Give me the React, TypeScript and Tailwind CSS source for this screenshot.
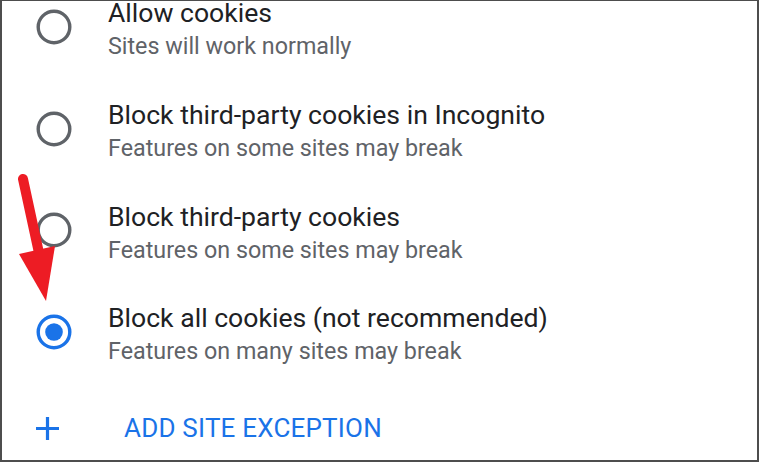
import { Fragment } from 'react';

type Option = {
  title: string;
  subtitle: string;
  checked?: boolean;
};

const options: Option[] = [
  { title: 'Allow cookies', subtitle: 'Sites will work normally' },
  {
    title: 'Block third-party cookies in Incognito',
    subtitle: 'Features on some sites may break',
  },
  { title: 'Block third-party cookies', subtitle: 'Features on some sites may break' },
  {
    title: 'Block all cookies (not recommended)',
    subtitle: 'Features on many sites may break',
    checked: true,
  },
];

const Radio = ({ checked }: { checked?: boolean }) => (
  <svg width="40" height="40" viewBox="0 0 40 40" className="shrink-0">
    <circle
      cx="20"
      cy="20"
      r="15.8"
      fill="none"
      stroke={checked ? '#1a73e8' : '#5f6368'}
      strokeWidth="3.4"
    />
    {checked ? <circle cx="20" cy="20" r="8.8" fill="#1a73e8" /> : null}
  </svg>
);

const App = () => {
  return (
    <div
      className="relative w-[759px] h-[462px] overflow-hidden bg-white border-t border-l-2 border-r-2 border-b-2 border-[#4d4d4d]"
      style={{ fontFamily: 'Roboto, "Liberation Sans", sans-serif' }}
    >
      <div className="flex flex-col -mt-[25px]">
        {options.map((o) => (
          <Fragment key={o.title}>
            <div className="flex items-center h-[101.7px] pl-[32px]">
              <Radio checked={o.checked} />
              <div className="flex flex-col ml-[34px] pt-[11px]">
                <div className="text-[26.6px] leading-[28px] text-[#202124] whitespace-nowrap">
                  {o.title}
                </div>
                <div className="text-[23.3px] leading-[38px] text-[#5f6368] whitespace-nowrap">
                  {o.subtitle}
                </div>
              </div>
            </div>
          </Fragment>
        ))}
        <div className="flex items-center h-[92px] pl-[33px]">
          <svg width="25" height="25" viewBox="0 0 25 25" className="shrink-0">
            <path d="M12.5 1v23M1 12.5h23" stroke="#1a73e8" strokeWidth="3.2" fill="none" />
          </svg>
          <div className="ml-[64px] text-[26px] text-[#1a73e8] tracking-[0.2px] whitespace-nowrap">
            ADD SITE EXCEPTION
          </div>
        </div>
      </div>

      {/* red annotation arrow */}
      <svg
        className="absolute left-0 top-0 pointer-events-none"
        width="100"
        height="320"
        viewBox="0 0 100 320"
      >
        <path d="M21 178 L37 252" stroke="#ed1c24" strokeWidth="10" strokeLinecap="round" fill="none" />
        <path d="M17 253 L53 245 L44 300 Z" fill="#ed1c24" />
      </svg>
    </div>
  );
};

export default App;
